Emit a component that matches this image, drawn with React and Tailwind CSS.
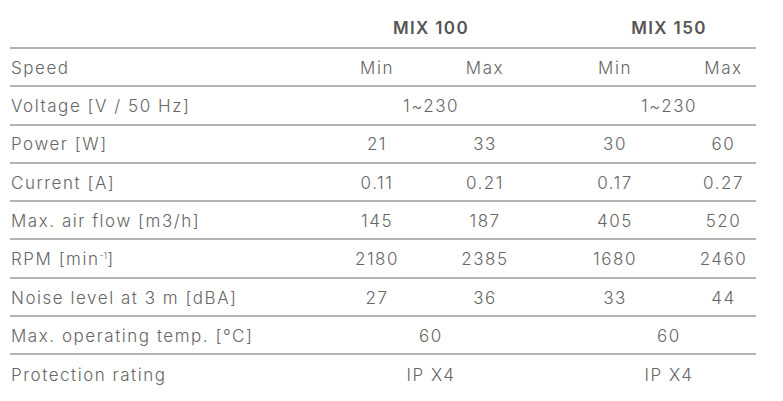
import React from 'react'

const rows = [
  { label: 'Voltage [V / 50 Hz]', merged: ['1~230', '1~230'] },
  { label: 'Power [W]', values: ['21', '33', '30', '60'] },
  { label: 'Current [A]', values: ['0.11', '0.21', '0.17', '0.27'] },
  { label: 'Max. air flow [m3/h]', values: ['145', '187', '405', '520'] },
  {
    label: (
      <>
        RPM [min<span className="text-[9px] relative -top-[6px] tracking-normal">-1</span>]
      </>
    ),
    values: ['2180', '2385', '1680', '2460'],
  },
  { label: 'Noise level at 3 m [dBA]', values: ['27', '36', '33', '44'] },
  { label: 'Max. operating temp. [°C]', merged: ['60', '60'] },
  { label: 'Protection rating', merged: ['IP X4', 'IP X4'] },
]

function Row({ label, values, merged, last }) {
  return (
    <div
      className={
        'flex items-center h-[38.3px] pt-[3px] ' +
        (last ? '' : 'border-b-2 border-[#b3b3b3]')
      }
    >
      <div className="w-[313px] pl-[1px]">{label}</div>
      {merged ? (
        <>
          <div className="w-[216px] text-center">{merged[0]}</div>
          <div className="w-[22px]" />
          <div className="w-[195px] pl-[21px] text-center">{merged[1]}</div>
        </>
      ) : (
        <>
          <div className="w-[108px] text-center">{values[0]}</div>
          <div className="w-[108px] text-center">{values[1]}</div>
          <div className="w-[22px]" />
          <div className="w-[108px] text-center">{values[2]}</div>
          <div className="w-[87px] pl-[22px] text-center">{values[3]}</div>
        </>
      )}
    </div>
  )
}

export default function App() {
  return (
    <div className="w-[783px] h-[401px] bg-white pt-[11px] pl-[10px]">
      <div
        className="w-[746px] text-[17px] font-light tracking-[0.09em] text-[#666]"
        style={{ fontFamily: 'Inter, "Open Sans", sans-serif' }}
      >
        {/* model header */}
        <div className="flex items-center h-[38px] border-b-2 border-[#b3b3b3] font-semibold text-[#555] tracking-[0.08em]">
          <div className="w-[313px]" />
          <div className="w-[216px] text-center">MIX 100</div>
          <div className="w-[22px]" />
          <div className="w-[195px] pl-[21px] text-center">MIX 150</div>
        </div>
        <Row label="Speed" values={['Min', 'Max', 'Min', 'Max']} />
        {rows.map((r, i) => (
          <Row key={i} {...r} last={i === rows.length - 1} />
        ))}
      </div>
    </div>
  )
}
